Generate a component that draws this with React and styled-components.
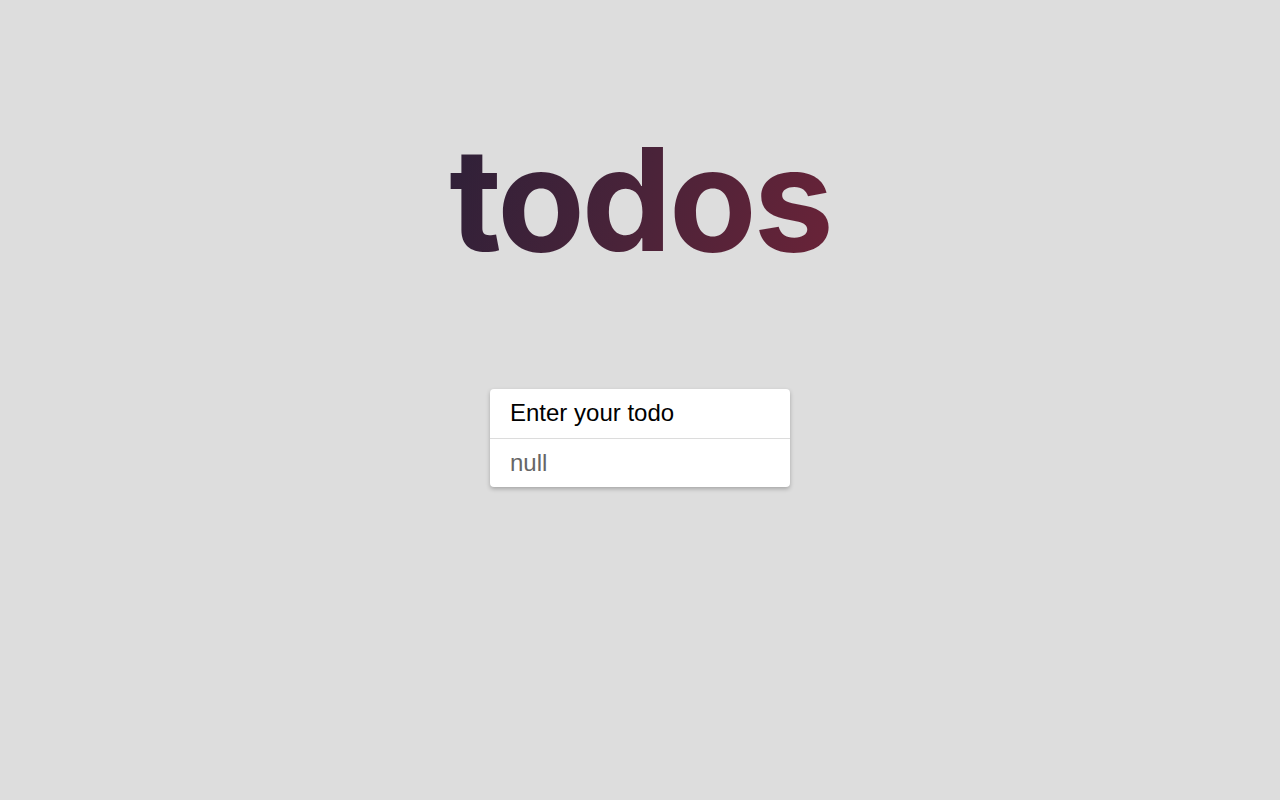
import React, { useState } from "react";
import styled, { createGlobalStyle } from "styled-components";

const GlobalStyle = createGlobalStyle`
  html, body {
    margin: 0;
    padding: 0;
    background: #dddddd;
  }
  body {
    font-family: "Liberation Sans", Arial, sans-serif;
  }
`;

const Page = styled.main`
  min-height: 800px;
  display: flex;
  flex-direction: column;
  align-items: center;
`;

const Title = styled.h1`
  margin: 113px 0 0;
  font-family: Inter, "Noto Sans", sans-serif;
  font-weight: 700;
  font-size: 143px;
  line-height: 1.2;
  letter-spacing: -3px;
  background: linear-gradient(110deg, #2d2038 0%, #4a2339 50%, #6b2338 100%);
  -webkit-background-clip: text;
  background-clip: text;
  color: transparent;
`;

const Card = styled.div`
  margin-top: 104px;
  width: 300px;
  background: #fff;
  border-radius: 4px;
  box-shadow: 0 2px 4px rgba(0, 0, 0, 0.25);
  overflow: hidden;
`;

const Input = styled.input`
  display: block;
  box-sizing: border-box;
  width: 100%;
  height: 49px;
  border: 0;
  outline: none;
  padding: 0 20px;
  font-family: inherit;
  font-size: 24px;
  color: #000;
  background: transparent;

  &::placeholder {
    color: #000;
  }
`;

const Row = styled.div`
  box-sizing: border-box;
  height: 49px;
  display: flex;
  align-items: center;
  padding: 0 20px;
  border-top: 1px solid #dcdcdc;
  font-size: 24px;
  color: ${({ muted }) => (muted ? "#666" : "#000")};
`;

export default function App() {
  const [todo, setTodo] = useState("");

  return (
    <>
      <GlobalStyle />
      <Page>
        <Title>todos</Title>
        <Card>
          <Input
            placeholder="Enter your todo"
            value={todo}
            onChange={(e) => setTodo(e.target.value)}
          />
          <Row muted>null</Row>
        </Card>
      </Page>
    </>
  );
}
